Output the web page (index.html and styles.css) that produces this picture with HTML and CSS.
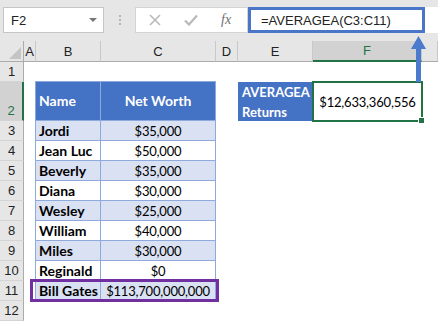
FILE: index.html
```html
<!DOCTYPE html>
<html lang="en">
<head>
    <meta charset="UTF-8">
    <title>AVERAGEA - Net Worth</title>
    <link rel="stylesheet" href="styles.css">
</head>
<body>
    <div class="bar">
        <div class="namebox">F2 <span class="caret"></span></div>
        <div class="grip"><i></i><i></i><i></i></div>
        <div class="fbtns">
            <svg class="ico-x" width="12" height="12" viewBox="0 0 12 12"><path d="M1 1L11 11M11 1L1 11" stroke="#b9b9b9" stroke-width="1.6"/></svg>
            <svg class="ico-ok" width="14" height="12" viewBox="0 0 14 12"><path d="M1 6.5L5 10.5L13 1.5" stroke="#b9b9b9" stroke-width="2.2" fill="none"/></svg>
            <span class="fx">fx</span>
        </div>
        <div class="formula">
            <div class="finput">=AVERAGEA(C3:C11)</div>
        </div>
    </div>

    <div class="sheet">
        <!-- column headers -->
        <div class="ch corner"><span class="tri"></span></div>
        <div class="ch">A</div>
        <div class="ch">B</div>
        <div class="ch">C</div>
        <div class="ch">D</div>
        <div class="ch">E</div>
        <div class="ch on">F</div>
        <div class="ch"></div>

        <div class="rh">1</div><div class="span7"></div>

        <div class="rh on">2</div>
        <div></div>
        <div class="t thead name">Name</div>
        <div class="t thead num">Net Worth</div>
        <div></div>
        <div class="lbl">AVERAGEA Returns</div>
        <div class="sel">$12,633,360,556<span class="handle"></span></div>
        <div></div>

        <div class="rh">3</div><div></div><div class="t alt name">Jordi</div><div class="t alt num">$35,000</div><div class="span4"></div>
        <div class="rh">4</div><div></div><div class="t name">Jean Luc</div><div class="t num">$50,000</div><div class="span4"></div>
        <div class="rh">5</div><div></div><div class="t alt name">Beverly</div><div class="t alt num">$35,000</div><div class="span4"></div>
        <div class="rh">6</div><div></div><div class="t name">Diana</div><div class="t num">$30,000</div><div class="span4"></div>
        <div class="rh">7</div><div></div><div class="t alt name">Wesley</div><div class="t alt num">$25,000</div><div class="span4"></div>
        <div class="rh">8</div><div></div><div class="t name">William</div><div class="t num">$40,000</div><div class="span4"></div>
        <div class="rh">9</div><div></div><div class="t alt name">Miles</div><div class="t alt num">$30,000</div><div class="span4"></div>
        <div class="rh">10</div><div></div><div class="t name">Reginald</div><div class="t num">$0</div><div class="span4"></div>
        <div class="rh">11</div><div></div><div class="t alt name hl-wrap">Bill Gates<span class="hl"></span></div><div class="t alt num">$113,700,000,000</div><div class="span4"></div>
        <div class="rh">12</div><div class="span7"></div>
    </div>

    <!-- arrow from the formula bar down to the result cell -->
    <svg class="arrow" width="18" height="48" viewBox="0 0 18 48">
        <path d="M8.5 1L16 14H1Z" fill="#4a7bcc"/>
        <rect x="6" y="13" width="5" height="34" fill="#4a7bcc"/>
    </svg>
</body>
</html>
```

FILE: styles.css
```css
body {
    margin: 0;
    width: 438px;
    height: 321px;
    overflow: hidden;
    position: relative;
    background: #fff;
    font-family: "Liberation Sans", Arial, sans-serif;
    color: #000;
}

/* formula bar */
.bar {
    display: flex;
    height: 41px;
    box-sizing: border-box;
    padding-top: 7px;
    background: #e6e6e6;
}
.namebox {
    margin-left: 3px;
    width: 101px;
    height: 26px;
    box-sizing: border-box;
    background: #fff;
    border: 1px solid #c6c6c6;
    display: flex;
    align-items: center;
    justify-content: space-between;
    padding: 0 6px 0 7px;
    font-size: 13px;
    color: #222;
}
.caret {
    width: 0;
    height: 0;
    border-left: 4px solid transparent;
    border-right: 4px solid transparent;
    border-top: 4px solid #777;
}
.grip {
    width: 31px;
    height: 26px;
    display: flex;
    flex-direction: column;
    align-items: center;
    justify-content: center;
    gap: 2px;
}
.grip i {
    width: 2px;
    height: 2px;
    background: #b4b4b4;
}
.fbtns {
    width: 113px;
    height: 26px;
    box-sizing: border-box;
    background: #fff;
    border: 1px solid #d4d4d4;
    display: flex;
    align-items: center;
}
.ico-x {
    margin-left: 13px;
}
.ico-ok {
    margin-left: 23px;
}
.fx {
    margin-left: 23px;
    font-family: "Liberation Serif", serif;
    font-style: italic;
    font-size: 14px;
    color: #707070;
}
.formula {
    flex: 1;
    height: 26px;
    background: #fff;
    display: flex;
}
.finput {
    width: 177px;
    box-sizing: border-box;
    border: 3px solid #4a76c8;
    padding-left: 10px;
    display: flex;
    align-items: center;
    font-size: 13px;
    color: #222;
}

/* worksheet */
.sheet {
    display: grid;
    grid-template-columns: 24px 12px 65px 115px 22px 75px 109px 1fr;
    grid-template-rows: 21px 20px 39px repeat(10, 20px);
    font-family: Lato, "Liberation Sans", sans-serif;
}
.ch {
    background: #e6e6e6;
    border-right: 1px solid #c8c8c8;
    border-bottom: 1px solid #ababab;
    display: flex;
    align-items: center;
    justify-content: center;
    font-family: "Liberation Sans", Arial, sans-serif;
    font-size: 13px;
    color: #222;
}
.ch.on {
    background: #d2d2d2;
    color: #217346;
    border-bottom: 2px solid #217346;
}
.corner {
    border-right-color: #ababab;
    position: relative;
}
.tri {
    position: absolute;
    right: 2px;
    bottom: 2px;
    width: 0;
    height: 0;
    border-left: 12px solid transparent;
    border-bottom: 12px solid #c4c4c4;
}
.rh {
    background: #e6e6e6;
    border-right: 1px solid #ababab;
    border-bottom: 1px solid #d4d4d4;
    display: flex;
    align-items: flex-end;
    justify-content: center;
    padding-bottom: 2px;
    box-sizing: border-box;
    font-family: "Liberation Sans", Arial, sans-serif;
    font-size: 13px;
    color: #222;
}
.rh.on {
    background: #d2d2d2;
    color: #217346;
    border-right: 2px solid #217346;
}
.span7 {
    grid-column: span 7;
}
.span4 {
    grid-column: span 4;
}

/* data table */
.t {
    box-sizing: border-box;
    border-right: 1px solid #8ea9db;
    border-bottom: 1px solid #8ea9db;
    display: flex;
    align-items: flex-end;
    padding: 0 3px 1px;
    font-size: 14px;
    white-space: nowrap;
}
.t.name {
    margin-left: -1px;
    border-left: 1px solid #8ea9db;
    font-weight: bold;
}
.t.num {
    justify-content: center;
    font-size: 13px;
    letter-spacing: -0.2px;
}
.t.alt {
    background: #d9e1f2;
}
.t.thead {
    margin-top: -1px;
    border-top: 1px solid #8ea9db;
    background: #4472c4;
    color: #fff;
    font-weight: bold;
    font-size: 14px;
    letter-spacing: 0;
    align-items: center;
}
.hl-wrap {
    position: relative;
}
.hl {
    position: absolute;
    left: -6px;
    top: -2px;
    width: 189px;
    height: 23px;
    box-sizing: border-box;
    border: 3px solid #7030a0;
}

.lbl {
    background: #4472c4;
    color: #fff;
    font-weight: bold;
    font-size: 13px;
    line-height: 20px;
    padding: 0 4px;
    margin-right: 1px;
    display: flex;
    align-items: center;
}
.sel {
    position: relative;
    margin: -1px;
    border: 2px solid #217346;
    display: flex;
    align-items: center;
    justify-content: center;
    font-size: 13px;
    letter-spacing: -0.2px;
}
.handle {
    position: absolute;
    right: -4px;
    bottom: -4px;
    width: 5px;
    height: 5px;
    background: #217346;
    border: 1px solid #fff;
}

.arrow {
    position: absolute;
    left: 410px;
    top: 35px;
}
```
